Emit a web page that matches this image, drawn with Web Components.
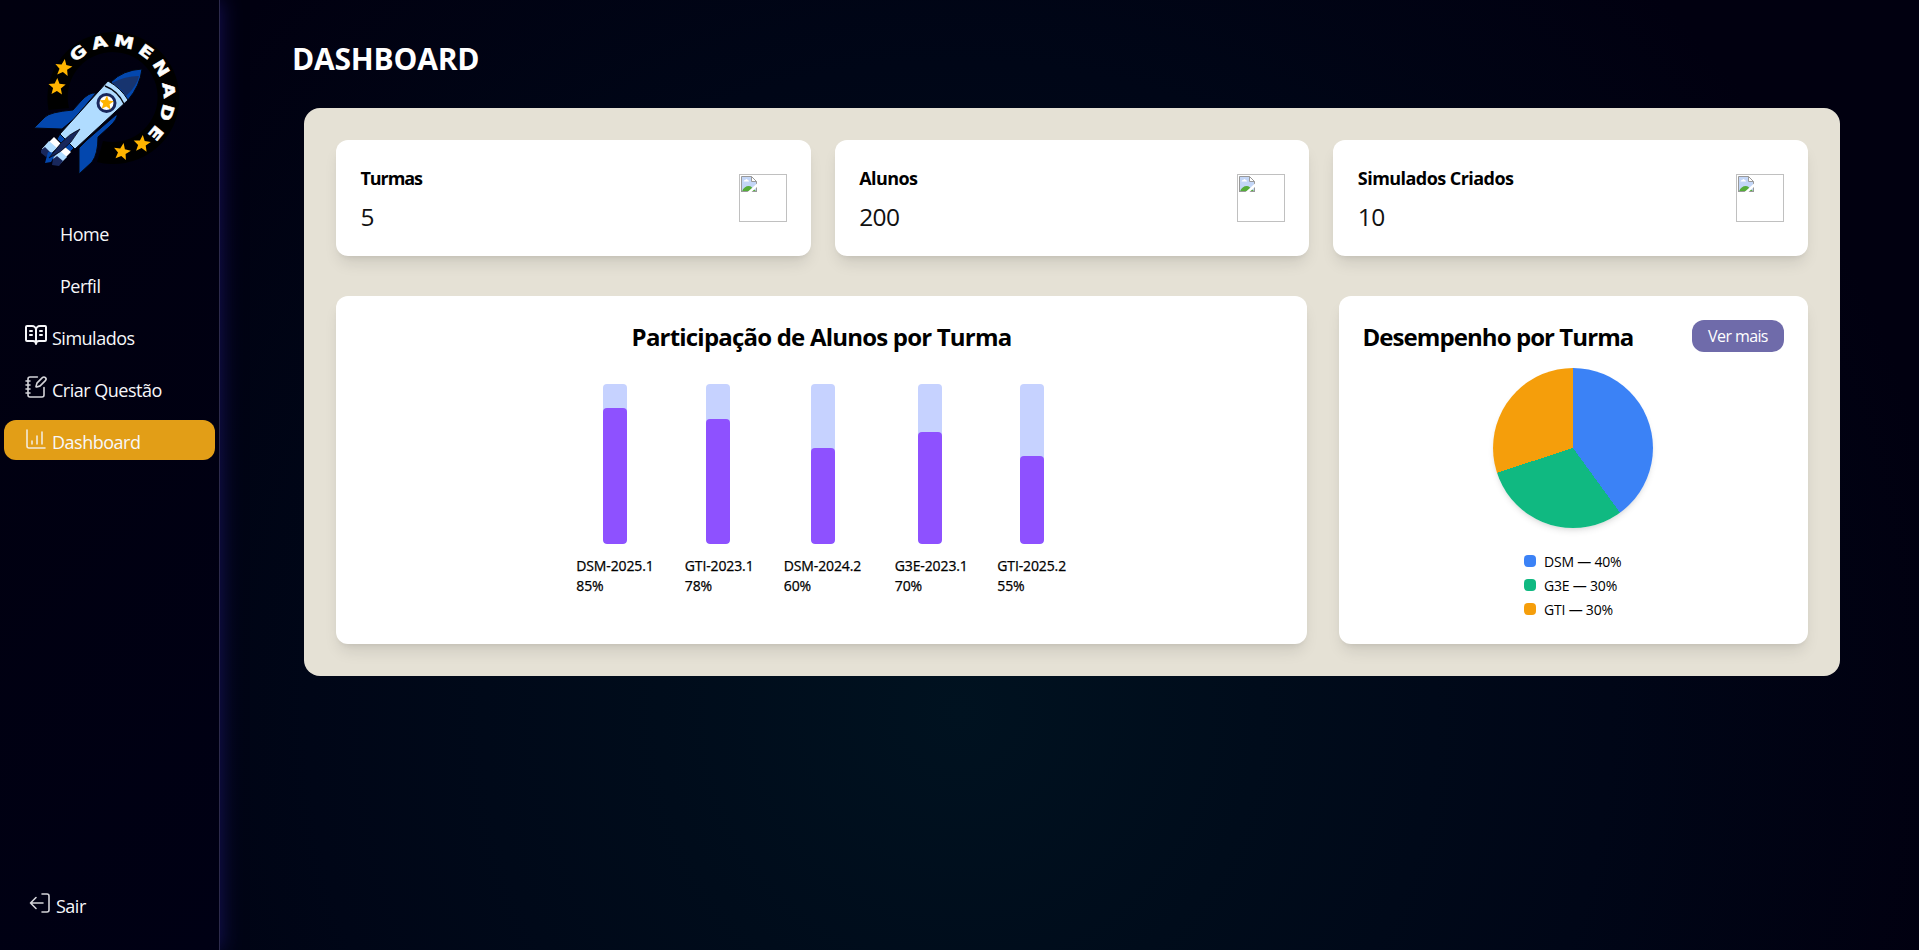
<!DOCTYPE html>
<html lang="pt-BR">
<head>
<meta charset="utf-8">
<title>Dashboard</title>
<style>
html,body{margin:0;height:100%}
body{font-family:"Open Sans","Noto Sans",sans-serif;color:#000;overflow:hidden}
</style>
</head>
<body>
<game-app></game-app>
<script>
const define=(name,html)=>customElements.define(name,class extends HTMLElement{
  constructor(){super();const t=document.createElement('template');t.innerHTML=typeof html==='function'?html(this):html;
    this.attachShadow({mode:'open'}).append(t.content.cloneNode(true));}
});
const star=(x,y,r,rot=0,c='#ffb400')=>{let p='';for(let i=0;i<10;i++){const a=(i*36-90+rot)*Math.PI/180,q=i%2?r*.45:r;p+=(x+q*Math.cos(a)).toFixed(1)+','+(y+q*Math.sin(a)).toFixed(1)+' ';}
  return `<polygon points="${p}" fill="${c}"/>`;};
const letters=[['G',-38.5],['A',-14],['M',11.5],['E',36],['N',59],['A',83],['D',106],['E',130]]
  .map(([l,a])=>`<text transform="translate(113 97) rotate(${a}) translate(0 -50.5) scale(1.25 1)" text-anchor="middle">${l}</text>`).join('');
define('game-logo',`<style>:host{display:block;height:200px}svg{display:block}text{font:bold 16px "DejaVu Sans",sans-serif;fill:#fff;stroke:#fff;stroke-width:.5px}</style>
<svg width="219" height="200" viewBox="0 0 219 200">
<path d="M48.500 110A66 66 0 1 1 97 162L103 141A45 45 0 1 0 69 108Z" fill="#000"/>
${letters}${star(63.5,68,9,8)}${star(57,87,9,2)}${star(122,152,9,10)}${star(142,144,9,5)}
<g stroke="#04060f" stroke-width="1" stroke-linejoin="round">
<path d="M96 93Q89 92 81 101L73 110Q50 112 45 117L34 128 62 129 74 119Z" fill="#0347ae"/>
<path d="M117 114Q118 119 109 127L98 137Q98 154 92 162L79 174 79 148 87 140Z" fill="#0347ae"/>
<path d="M111 82Q123 70 142 69Q140 86 128 100Z" fill="#0347ae"/>
<path d="M108 81Q121 88 128 100L75 149 60 134Z" fill="#b0dcff"/>
</g>
<path d="M112 83Q125 76 139 76Q137 86 126 96Q121 88 112 83Z" fill="#17346f"/>
<path d="M105 86Q118 91 124 104" stroke="#04060f" stroke-width="1.4" fill="none"/>
<path d="M60 134L74 148 70 152 57 139Z" fill="#0347ae" stroke="#04060f"/>
<path d="M54 137L61 144 49 155 42 149Z" fill="#fff"/><path d="M49 141L57 148 49 155 42 149Z" fill="#b0dcff"/><path d="M45 147L51 153 46 157 41 153 41 150Z" fill="#18275c"/>
<path d="M65 147L71 152 60 163 53 158Z" fill="#fff"/><path d="M60 151L67 157 60 164 53 158Z" fill="#b0dcff"/><path d="M57 156L63 161 59 166 52 165 53 159Z" fill="#18275c"/>
<path d="M48 152L56 153 51 162 45 163Z" fill="#0347ae"/>
<path d="M80 129Q69 134 61 143L49 158Q61 153 71 142Z" fill="#18275c" stroke="#04060f" stroke-width=".7"/>
<circle cx="106.500" cy="103" r="8.500" fill="#fff" stroke="#18275c" stroke-width="3"/>${star(106.5,103,7.5,4)}
</svg>`);
const icons={
book:'<path d="M12 7v14M16 12h2M16 8h2M3 18a1 1 0 0 1-1-1V4a1 1 0 0 1 1-1h5a4 4 0 0 1 4 4 4 4 0 0 1 4-4h5a1 1 0 0 1 1 1v13a1 1 0 0 1-1 1h-6a3 3 0 0 0-3 3 3 3 0 0 0-3-3zM6 12h2M6 8h2"/>',
note:'<path d="M13.400 2H6a2 2 0 0 0-2 2v16a2 2 0 0 0 2 2h12a2 2 0 0 0 2-2v-7.400M2 6h4M2 10h4M2 14h4M2 18h4M21.378 5.626a1 1 0 1 0-3.004-3.004l-5.010 5.012a2 2 0 0 0-.506.854l-.837 2.870a.5.5 0 0 0 .620.620l2.870-.837a2 2 0 0 0 .854-.506z"/>',
chart:'<path d="M3 3v16a2 2 0 0 0 2 2h16M18 17V5M13 17V9M8 17v-3"/>',
exit:'<path d="M2.500 12H15M8 6.500L2.500 12 8 17.500M14 3h5a2 2 0 0 1 2 2v14a2 2 0 0 1-2 2h-5"/>'};
define('nav-item',el=>{const i=el.getAttribute('icon'),on=el.hasAttribute('active');return `<style>
:host{display:block;color:#f7f7fa;font-size:18px;letter-spacing:-.5px}
a{display:flex;align-items:center;height:40px;margin:0 4px;border-radius:12px;padding-left:${i?(i==='exit'?24:20):56}px;background:${on?'#e29e17':'none'}}
svg{flex:none;width:24px;height:24px;margin:-2px 4px 0 0;fill:none;stroke:currentColor;stroke-width:${i==='book'?2:1.6};stroke-linecap:round;stroke-linejoin:round;opacity:${i==='book'?1:.86}}
span{padding-top:4px}</style><a>${i?`<svg viewBox="0 0 24 24">${icons[i]}</svg>`:''}<span><slot></slot></span></a>`});
define('side-bar',`<style>:host{display:flex;flex-direction:column;width:219px;border-right:1px solid #2c2a4c;background:linear-gradient(135deg,#01000f,#000014);box-shadow:0 0 20px rgba(40,30,150,.55);box-sizing:content-box}
nav{display:flex;flex-direction:column;gap:12px;padding-top:12px;flex:1}.out{padding-bottom:26px}</style>
<game-logo></game-logo><nav><nav-item>Home</nav-item><nav-item>Perfil</nav-item><nav-item icon="book">Simulados</nav-item><nav-item icon="note">Criar Questão</nav-item><nav-item icon="chart" active>Dashboard</nav-item></nav>
<nav-item class="out" icon="exit">Sair</nav-item>`);
define('missing-image',`<style>:host{display:block;width:46px;height:46px;border:1px solid #c0c0c0}svg{display:block;margin:1px}</style>
<svg width="16" height="16" viewBox="0 0 16 16"><path d="M.5.500h10l5 5V15.500H.500z" fill="#c3d6f7"/><path d="M2.500 5.500q.3-1.700 1.800-1.500 1.200-1.800 2.400 0 1.300.200 1.300 1.500z" fill="#fff"/><path d="M1 15.500Q3 10 8 10q2 0 3.500 2l4 3.500z" fill="#55ad39"/><path d="M10.500.500v5h5z" fill="#fff"/><path d="M.5 16V.500h10l5 5V16M10.500.500v5h5M0 15.500h16" fill="none" stroke="#999"/><path d="M16 7.500L6.500 16h4L16 11z" fill="#fff"/></svg>`);
define('stat-card',el=>`<style>:host{display:flex;justify-content:space-between;align-items:center;height:116px;box-sizing:border-box;padding:0 24px;background:#fff;border-radius:12px;box-shadow:0 10px 15px -3px rgba(0,0,0,.1),0 4px 6px -4px rgba(0,0,0,.1)}
h2{margin:0;font-size:18px;line-height:28px;font-weight:700;letter-spacing:var(--label-spacing,-.55px)}p{margin:9px 0 0;font-size:24.500px;line-height:32px;letter-spacing:-.6px;color:#111}.t{padding-left:.5px}</style>
<div class="t"><h2>${el.getAttribute('label')}</h2><p><slot></slot></p></div><missing-image></missing-image>`);
define('bar-column',el=>{const v=el.getAttribute('value');return `<style>:host{display:flex;flex-direction:column;align-items:center;width:${el.getAttribute('w')}px}
.b{width:24px;height:160px;border-radius:4px;background:#c6d2ff;display:flex;align-items:flex-end;overflow:hidden}.f{width:100%;height:${v}%;background:#8e51ff;border-radius:4px}
.l{width:100%;margin-top:12px;font-size:14px;line-height:20px;-webkit-text-stroke:.25px #000;white-space:nowrap;letter-spacing:-.12px}</style>
<div class="b"><div class="f"></div></div><div class="l"><slot></slot><br>${v}%</div>`});
define('bar-panel',`<style>:host{display:flex;flex-direction:column;align-items:center;background:#fff;border-radius:12px;box-shadow:0 10px 15px -3px rgba(0,0,0,.1),0 4px 6px -4px rgba(0,0,0,.1)}
h2{margin:23px 0 0;font-size:24px;line-height:36px;letter-spacing:-.8px}.c{display:flex;gap:32px;margin-top:29px}</style>
<h2>Participação de Alunos por Turma</h2><div class="c"><bar-column value="85" w="76.500">DSM-2025.1</bar-column><bar-column value="78" w="67">GTI-2023.1</bar-column><bar-column value="60" w="79">DSM-2024.2</bar-column><bar-column value="70" w="70.500">G3E-2023.1</bar-column><bar-column value="55" w="69.500">GTI-2025.2</bar-column></div>`);
define('pie-panel',`<style>:host{display:block;box-sizing:border-box;padding:24px;background:#fff;border-radius:12px;box-shadow:0 10px 15px -3px rgba(0,0,0,.1),0 4px 6px -4px rgba(0,0,0,.1)}
header{display:flex;justify-content:space-between;height:48px}h2{margin:-1px 0 0 -.5px;font-size:24px;line-height:36px;letter-spacing:-.93px;white-space:nowrap}
button{border:0;margin:0;height:32px;width:92px;padding:0 0 1px;border-radius:12px;background:#6f6baa;color:#fff;font:16px "Open Sans",sans-serif;letter-spacing:-.6px}
.pie{width:160px;height:160px;margin:0 auto 0 129.500px;border-radius:50%;background:conic-gradient(#3b82f6 0 40%,#10b981 40% 70%,#f59e0b 70%);box-shadow:0 4px 6px -1px rgba(0,0,0,.1),0 2px 4px -2px rgba(0,0,0,.1)}
ul{list-style:none;margin:24px auto 0;padding:0;width:99px;display:grid;gap:4px;font-size:14px;line-height:20px;letter-spacing:-.2px;white-space:nowrap}
li{display:flex;gap:8px}i{width:12px;height:12px;border-radius:4px;margin-top:3px;flex:none}</style>
<header><h2>Desempenho por Turma</h2><button>Ver mais</button></header><div class="pie"></div>
<ul><li><i style="background:#3b82f6"></i>DSM — 40%</li><li><i style="background:#10b981"></i>G3E — 30%</li><li><i style="background:#f59e0b"></i>GTI — 30%</li></ul>`);
define('game-app',`<style>:host{display:flex;height:950px;background:radial-gradient(circle at 50% 75%,#001220 0,#000c1b 300px,#000617 650px,#010010 1000px)}
main{flex:1;padding:35px 79px 0 72px}h1{margin:0;color:#fff;font-size:30px;line-height:48px;letter-spacing:-.2px}
section{margin:25px 0 0 12px;width:1472px;padding:32px;border-radius:16px;background:#e5e1d5}
.s{display:grid;grid-template-columns:repeat(3,1fr);gap:24px}.s :first-child{--label-spacing:-1.1px}.p{display:grid;grid-template-columns:971px 1fr;gap:32px;margin-top:40px;height:348px}</style>
<side-bar></side-bar><main><h1>DASHBOARD</h1><section><div class="s"><stat-card label="Turmas">5</stat-card><stat-card label="Alunos">200</stat-card><stat-card label="Simulados Criados">10</stat-card></div>
<div class="p"><bar-panel></bar-panel><pie-panel></pie-panel></div></section></main>`);
</script>
</body>
</html>
